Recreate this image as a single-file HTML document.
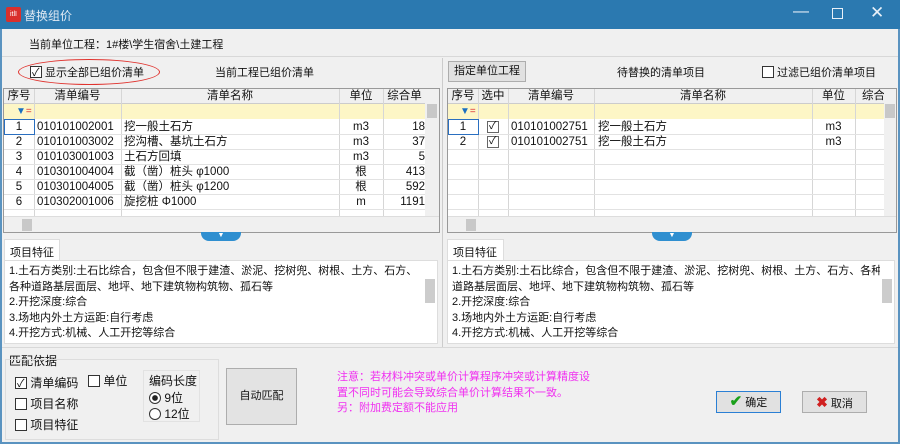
<!DOCTYPE html>
<html><head><meta charset="utf-8"><style>
*{box-sizing:border-box;margin:0;padding:0}
body{width:900px;height:444px;overflow:hidden;background:#f0f0f0;font-family:"Liberation Sans","Noto Sans CJK SC",sans-serif;font-size:11px;color:#111;position:relative}
.a{position:absolute;white-space:nowrap}
.title{left:0;top:0;width:900px;height:29px;background:#2b79b0;color:#dfe9f3;font-size:12px}
.grid{background:#fff;border:1px solid #999;overflow:hidden}
.hdr{background:#f0f0f0;height:15px;border-bottom:1px solid #ccc}
.cell{position:absolute;height:15px;line-height:15px;white-space:nowrap;overflow:hidden;font-size:11.5px}
.vl{position:absolute;top:0;bottom:0;width:1px;background:#d6d6d6}
.hl{position:absolute;left:0;right:0;height:1px;background:#e2e2e2}
.flt{position:absolute;left:0;right:0;top:15px;height:15px;background:#fdf6c6}
.sb{position:absolute;background:#f0f0f0}
.txt{background:#fff;border:1px solid #ddd;line-height:15.5px;padding:3px 0 0 4px;font-size:11px;white-space:nowrap;overflow:hidden}
.cb{display:inline-block;width:12px;height:12px;border:1px solid #333;background:#fff;vertical-align:-2px;position:relative}
.btn{background:#e1e1e1;border:1px solid #adadad;text-align:center}
</style></head><body>
<div class="a title"><div class="a" style="left:6px;top:7px;width:15px;height:15px;background:#d9302c;border-radius:2px;color:#fff;font-size:7px;line-height:15px;text-align:center">itlI</div><span class="a" style="left:24px;top:7px">替换组价</span>
<span class="a" style="left:793px;top:3px;font-size:16px;color:#e8f0f8">—</span>
<div class="a" style="left:832px;top:8px;width:11px;height:11px;border:1px solid #e8f0f8"></div>
<span class="a" style="left:870px;top:3px;font-size:17px;color:#e8f0f8">✕</span></div>
<div class="a" style="left:0;top:29px;width:2px;height:415px;background:#5a93c0"></div>
<div class="a" style="left:898px;top:29px;width:2px;height:415px;background:#5a93c0"></div>
<div class="a" style="left:29px;top:36px">当前单位工程：1#楼\学生宿舍\土建工程</div>
<div class="a" style="left:2px;top:56px;width:896px;height:1px;background:#d8d8d8"></div>
<div class="a" style="left:18px;top:59px;width:142px;height:26px;border:1.5px solid #e0332e;border-radius:50%"></div>
<div class="a" style="left:30px;top:64px"><span class="cb"><span class="a" style="left:1px;top:-3px;font-size:11px">✓</span></span> 显示全部已组价清单</div>
<div class="a" style="left:215px;top:64px">当前工程已组价清单</div>
<div class="a" style="left:442px;top:58px;width:1px;height:290px;background:#ccc"></div>
<div class="a btn" style="left:448px;top:61px;width:78px;height:21px;line-height:19px">指定单位工程</div>
<div class="a" style="left:617px;top:64px">待替换的清单项目</div>
<div class="a" style="left:762px;top:64px"><span class="cb"></span> 过滤已组价清单项目</div>

<!-- left grid -->
<div class="a grid" style="left:3px;top:88px;width:437px;height:145px">
<div class="hdr a" style="left:0;right:0;top:0"></div>
<div class="flt"></div>
<div class="cell" style="left:0;width:30px;top:0;text-align:center">序号</div>
<div class="cell" style="left:30px;width:87px;top:0;text-align:center">清单编号</div>
<div class="cell" style="left:117px;width:218px;top:0;text-align:center">清单名称</div>
<div class="cell" style="left:335px;width:44px;top:0;text-align:center">单位</div>
<div class="cell" style="left:379px;width:43px;top:0;text-align:center">综合单</div>
<div class="cell" style="left:12px;top:15px;color:#1a6fc0;font-size:10px">▼<span style="color:#d33">=</span></div>
<div class="vl" style="left:30px"></div><div class="vl" style="left:117px"></div><div class="vl" style="left:335px"></div><div class="vl" style="left:379px"></div>
<div class="hl" style="top:45px"></div><div class="hl" style="top:60px"></div><div class="hl" style="top:75px"></div><div class="hl" style="top:90px"></div><div class="hl" style="top:105px"></div><div class="hl" style="top:120px"></div>
<div class="a" style="left:0;top:30px;width:31px;height:16px;border:1.5px solid #2a6fc0"></div>
<div class="cell" style="top:31px;left:0;width:30px;text-align:center">1</div><div class="cell" style="top:31px;left:33px">010101002001</div><div class="cell" style="top:31px;left:120px">挖一般土石方</div><div class="cell" style="top:31px;left:335px;width:44px;text-align:center">m3</div><div class="cell" style="top:31px;left:379px;width:42px;text-align:right">18</div>
<div class="cell" style="top:46px;left:0;width:30px;text-align:center">2</div><div class="cell" style="top:46px;left:33px">010101003002</div><div class="cell" style="top:46px;left:120px">挖沟槽、基坑土石方</div><div class="cell" style="top:46px;left:335px;width:44px;text-align:center">m3</div><div class="cell" style="top:46px;left:379px;width:42px;text-align:right">37</div>
<div class="cell" style="top:61px;left:0;width:30px;text-align:center">3</div><div class="cell" style="top:61px;left:33px">010103001003</div><div class="cell" style="top:61px;left:120px">土石方回填</div><div class="cell" style="top:61px;left:335px;width:44px;text-align:center">m3</div><div class="cell" style="top:61px;left:379px;width:42px;text-align:right">5</div>
<div class="cell" style="top:76px;left:0;width:30px;text-align:center">4</div><div class="cell" style="top:76px;left:33px">010301004004</div><div class="cell" style="top:76px;left:120px">截（凿）桩头 φ1000</div><div class="cell" style="top:76px;left:335px;width:44px;text-align:center">根</div><div class="cell" style="top:76px;left:379px;width:42px;text-align:right">413</div>
<div class="cell" style="top:91px;left:0;width:30px;text-align:center">5</div><div class="cell" style="top:91px;left:33px">010301004005</div><div class="cell" style="top:91px;left:120px">截（凿）桩头 φ1200</div><div class="cell" style="top:91px;left:335px;width:44px;text-align:center">根</div><div class="cell" style="top:91px;left:379px;width:42px;text-align:right">592</div>
<div class="cell" style="top:106px;left:0;width:30px;text-align:center">6</div><div class="cell" style="top:106px;left:33px">010302001006</div><div class="cell" style="top:106px;left:120px">旋挖桩 Φ1000</div><div class="cell" style="top:106px;left:335px;width:44px;text-align:center">m</div><div class="cell" style="top:106px;left:379px;width:42px;text-align:right">1191</div>
<div class="sb" style="right:0;top:0;width:14px;height:128px"><div class="a" style="left:2px;top:15px;width:10px;height:14px;background:#c8c8c8"></div></div>
<div class="sb" style="left:0;right:0;bottom:0;height:16px;border-top:1px solid #ddd"><div class="a" style="left:18px;top:2px;width:10px;height:12px;background:#c8c8c8"></div></div>
</div>
<div class="a" style="left:201px;top:232px;width:40px;height:9px;background:#2f8fd0;border-radius:0 0 8px 8px;color:#fff;font-size:7px;text-align:center;line-height:8px">▼</div>

<!-- right grid -->
<div class="a grid" style="left:447px;top:88px;width:450px;height:145px">
<div class="hdr a" style="left:0;right:0;top:0"></div>
<div class="flt"></div>
<div class="cell" style="left:0;width:30px;top:0;text-align:center">序号</div>
<div class="cell" style="left:30px;width:30px;top:0;text-align:center">选中</div>
<div class="cell" style="left:60px;width:86px;top:0;text-align:center">清单编号</div>
<div class="cell" style="left:146px;width:218px;top:0;text-align:center">清单名称</div>
<div class="cell" style="left:364px;width:43px;top:0;text-align:center">单位</div>
<div class="cell" style="left:407px;width:30px;top:0;padding-left:7px">综合</div>
<div class="cell" style="left:12px;top:15px;color:#1a6fc0;font-size:10px">▼<span style="color:#d33">=</span></div>
<div class="vl" style="left:30px"></div><div class="vl" style="left:60px"></div><div class="vl" style="left:146px"></div><div class="vl" style="left:364px"></div><div class="vl" style="left:407px"></div>
<div class="hl" style="top:45px"></div><div class="hl" style="top:60px"></div><div class="hl" style="top:75px"></div><div class="hl" style="top:90px"></div><div class="hl" style="top:105px"></div><div class="hl" style="top:120px"></div>
<div class="a" style="left:0;top:30px;width:31px;height:16px;border:1.5px solid #2a6fc0"></div>
<div class="cell" style="top:31px;left:0;width:30px;text-align:center">1</div><div class="cell" style="top:32px;left:39px"><span class="cb" style="border-color:#666"><span class="a" style="left:1px;top:-3px;font-size:11px">✓</span></span></div><div class="cell" style="top:31px;left:63px">010101002751</div><div class="cell" style="top:31px;left:150px">挖一般土石方</div><div class="cell" style="top:31px;left:364px;width:43px;text-align:center">m3</div>
<div class="cell" style="top:46px;left:0;width:30px;text-align:center">2</div><div class="cell" style="top:47px;left:39px"><span class="cb" style="border-color:#666"><span class="a" style="left:1px;top:-3px;font-size:11px">✓</span></span></div><div class="cell" style="top:46px;left:63px">010101002751</div><div class="cell" style="top:46px;left:150px">挖一般土石方</div><div class="cell" style="top:46px;left:364px;width:43px;text-align:center">m3</div>
<div class="sb" style="right:0;top:0;width:12px;height:128px"><div class="a" style="left:1px;top:15px;width:10px;height:14px;background:#c8c8c8"></div></div>
<div class="sb" style="left:0;right:0;bottom:0;height:16px;border-top:1px solid #ddd"><div class="a" style="left:18px;top:2px;width:10px;height:12px;background:#c8c8c8"></div></div>
</div>
<div class="a" style="left:652px;top:232px;width:40px;height:9px;background:#2f8fd0;border-radius:0 0 8px 8px;color:#fff;font-size:7px;text-align:center;line-height:8px">▼</div>

<!-- features -->
<div class="a" style="left:4px;top:239px;width:56px;height:22px;background:#fff;border:1px solid #ddd;border-bottom:none;padding:4px 0 0 5px">项目特征</div>
<div class="a txt" style="left:4px;top:260px;width:434px;height:84px">1.土石方类别:土石比综合，包含但不限于建渣、淤泥、挖树兜、树根、土方、石方、<br>各种道路基层面层、地坪、地下建筑物构筑物、孤石等<br>2.开挖深度:综合<br>3.场地内外土方运距:自行考虑<br>4.开挖方式:机械、人工开挖等综合
<div class="sb" style="right:0;top:0;width:14px;height:82px;background:#fff"><div class="a" style="left:2px;top:18px;width:10px;height:24px;background:#ccc"></div></div></div>
<div class="a" style="left:447px;top:239px;width:57px;height:22px;background:#fff;border:1px solid #ddd;border-bottom:none;padding:4px 0 0 5px">项目特征</div>
<div class="a txt" style="left:447px;top:260px;width:448px;height:84px">1.土石方类别:土石比综合，包含但不限于建渣、淤泥、挖树兜、树根、土方、石方、各种<br>道路基层面层、地坪、地下建筑物构筑物、孤石等<br>2.开挖深度:综合<br>3.场地内外土方运距:自行考虑<br>4.开挖方式:机械、人工开挖等综合
<div class="sb" style="right:0;top:0;width:14px;height:82px;background:#fff"><div class="a" style="left:2px;top:18px;width:10px;height:24px;background:#ccc"></div></div></div>
<div class="a" style="left:2px;top:347px;width:896px;height:1px;background:#d8d8d8"></div>

<!-- bottom -->
<div class="a" style="left:9px;top:352px;font-size:12px">匹配依据</div>
<div class="a" style="left:5px;top:359px;width:214px;height:81px;border:1px solid #ddd"></div>
<div class="a" style="left:15px;top:374px;font-size:12px"><span class="cb"><span class="a" style="left:1px;top:-3px;font-size:11px">✓</span></span> 清单编码</div>
<div class="a" style="left:88px;top:372px;font-size:12px"><span class="cb"></span> 单位</div>
<div class="a" style="left:15px;top:395px;font-size:12px"><span class="cb"></span> 项目名称</div>
<div class="a" style="left:15px;top:416px;font-size:12px"><span class="cb"></span> 项目特征</div>
<div class="a" style="left:143px;top:370px;width:57px;height:52px;border:1px solid #e2e2e2"></div>
<div class="a" style="left:149px;top:372px;font-size:12px">编码长度</div>
<div class="a" style="left:149px;top:389px;font-size:12px"><span style="display:inline-block;width:12px;height:12px;border:1px solid #333;border-radius:50%;vertical-align:-2px;background:radial-gradient(#222 35%,#fff 45%)"></span> 9位</div>
<div class="a" style="left:149px;top:405px;font-size:12px"><span style="display:inline-block;width:12px;height:12px;border:1px solid #333;border-radius:50%;vertical-align:-2px;background:#fff"></span> 12位</div>
<div class="a btn" style="left:226px;top:368px;width:71px;height:57px;line-height:55px;background:#e3e3e3">自动匹配</div>
<div class="a" style="left:337px;top:370px;color:#f030f0;line-height:15.5px">注意：若材料冲突或单价计算程序冲突或计算精度设<br>置不同时可能会导致综合单价计算结果不一致。<br>另：附加费定额不能应用</div>
<div class="a btn" style="left:716px;top:391px;width:65px;height:22px;border:1.5px solid #2a7fd4;line-height:19px"><span style="color:#1aa01a;font-weight:bold;font-size:15px">✔</span> 确定</div>
<div class="a btn" style="left:802px;top:391px;width:65px;height:22px;line-height:20px"><span style="color:#d02020;font-weight:bold;font-size:14px">✖</span> 取消</div>
<div class="a" style="left:0;top:442px;width:900px;height:2px;background:#5a93c0"></div>
</body></html>
